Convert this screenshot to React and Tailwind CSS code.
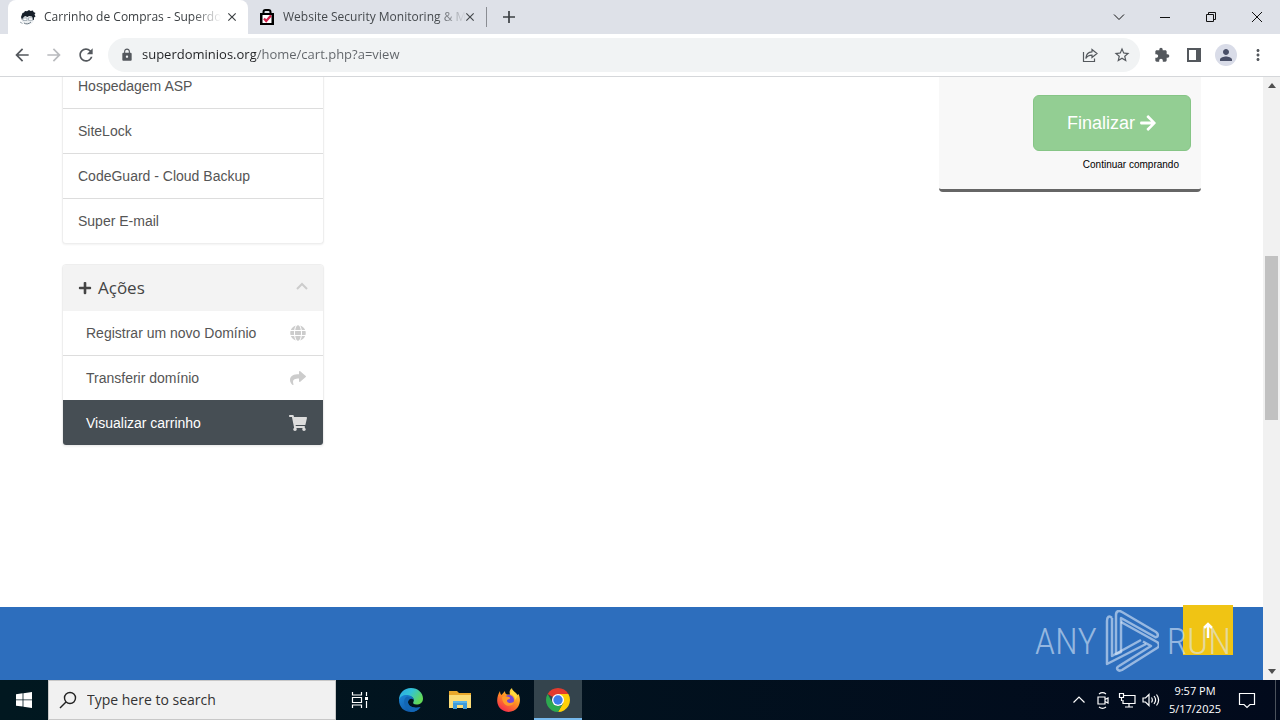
import React from "react";
import { FaArrowRight, FaGlobe, FaPlus, FaShare, FaShoppingCart } from "react-icons/fa";
import {
  MdArrowBack,
  MdArrowForward,
  MdClose,
  MdExtension,
  MdLock,
  MdMoreVert,
  MdPerson,
  MdRefresh,
  MdStarBorder,
} from "react-icons/md";

function CartoonFavicon() {
  return (
    <svg viewBox="0 0 16 16" className="size-4 shrink-0" aria-hidden="true">
      <path d="M2.500 8c2-3 10-3 11 0l.5 3c-1 3-3 4.500-6 4.500S1.500 14 1.500 11z" fill="#eceff1" />
      <path d="M1 8 2.500 4 4 3.500 5 2l2 .3L9 1l1.500 1L13 1.500 13.500 3 15.500 4l-1 1.500 1 2-1.500 1V11l-1.500-.5L12 7.500 9 7 7.500 8 5 7 3 9l-1 2z" fill="#17202a" />
      <path d="M3 9h4v2.500H3zM8.500 8.800h4v2.500h-4z" fill="#fff" stroke="#8b98a3" strokeWidth=".7" />
      <path d="M4 14c2 1.500 5 1 7-1" fill="none" stroke="#5c6b77" strokeWidth=".9" />
      <path d="M0 13l2.500 1.500" stroke="#9aa4ad" strokeWidth="1" />
    </svg>
  );
}

function BagFavicon() {
  return (
    <svg viewBox="0 0 16 16" className="-ml-px size-4 shrink-0" aria-hidden="true">
      <path d="M4.500 5V3c0-1 .8-2 2-2h3c1.200 0 2 1 2 2v2" fill="none" stroke="#000" strokeWidth="2" />
      <path d="M1 4h14v12H1z" fill="#000" />
      <path d="M3.500 6h9v8h-9z" fill="#fff" />
      <path d="m5 9.500 2.200 2.500L12 6.500" fill="none" stroke="#d3214b" strokeWidth="2.200" />
    </svg>
  );
}

function Tab({ title, active, icon }) {
  return (
    <div
      className={
        active
          ? "flex h-full w-60 items-center rounded-t-lg bg-white pl-3 pr-2 text-[#3c4043]"
          : "flex h-full w-[238px] items-center pl-3 pr-2 text-[#45494d]"
      }
    >
      <button role="tab" aria-selected={active} className="flex min-w-0 flex-1 items-center gap-2">
        {icon}
        <span className="flex-1 whitespace-nowrap text-left text-xs [mask-image:linear-gradient(90deg,#000_84%,transparent)]">
          {title}
        </span>
      </button>
      <button aria-label="Close tab" className="ml-2 flex size-4 items-center justify-center">
        <MdClose className="size-3.5" />
      </button>
    </div>
  );
}

function WindowButton({ label, children }) {
  return (
    <button aria-label={label} className="flex h-7 w-[46px] items-center justify-center">
      <svg viewBox="0 0 12 12" className="size-3" fill="none" stroke="#111" strokeWidth="1" aria-hidden="true">
        {children}
      </svg>
    </button>
  );
}

function TabStrip() {
  return (
    <header className="flex h-[34px] shrink-0 items-center justify-between bg-[#dee1e8]">
      <div role="tablist" className="flex h-full items-center pl-2">
        <Tab active title="Carrinho de Compras - Superdo" icon={<CartoonFavicon />} />
        <Tab active={false} title="Website Security Monitoring &amp; M" icon={<BagFavicon />} />
        <span className="h-5 w-px bg-[#8a8d93]" />
        <button aria-label="New tab" className="ml-2 flex size-7 items-center justify-center">
          <svg viewBox="0 0 14 14" className="size-3.5" stroke="#3c4043" strokeWidth="1.700" aria-hidden="true">
            <path d="M7 1v12M1 7h12" />
          </svg>
        </button>
      </div>
      <div className="flex">
        <WindowButton label="Search tabs"><path d="M1 3.500 6 8.500l5-5" /></WindowButton>
        <WindowButton label="Minimize"><path d="M1 6.500h10" /></WindowButton>
        <WindowButton label="Restore"><path d="M1.500 3.500h7v7h-7zM3.500 3.500v-2h7v7h-2" /></WindowButton>
        <WindowButton label="Close"><path d="m1 1 10 10M11 1 1 11" /></WindowButton>
      </div>
    </header>
  );
}

function ToolButton({ label, children }) {
  return (
    <button aria-label={label} className="flex size-8 items-center justify-center text-lg text-[#54585d]">
      {children}
    </button>
  );
}

function Toolbar() {
  return (
    <nav className="flex h-[43px] shrink-0 items-center border-b border-[#d5d7da] bg-white px-1.5">
      <ToolButton label="Back"><MdArrowBack className="size-5" /></ToolButton>
      <ToolButton label="Forward"><MdArrowForward className="size-5 text-[#b9bbbe]" /></ToolButton>
      <ToolButton label="Reload"><MdRefresh className="size-5" /></ToolButton>
      <div className="ml-1.5 mr-1.5 flex h-[34px] flex-1 items-center rounded-full bg-[#f1f3f4] pl-3 pr-0.5">
        <MdLock className="size-3.5 text-[#54585d]" />
        <input
          aria-label="Address"
          defaultValue="superdominios.org/home/cart.php?a=view"
          className="ml-2 min-w-0 flex-1 bg-[linear-gradient(90deg,#202124_114px,#5f6368_114px)] bg-clip-text text-[13px] text-transparent outline-none"
        />
        <ToolButton label="Share">
          <svg viewBox="0 0 16 16" className="size-4" fill="none" stroke="currentColor" strokeWidth="1.200" aria-hidden="true">
            <path d="M1.500 5v9.500h11v-3" />
            <path d="M10 2.500 15 6.500l-5 4V8.200C7 8.200 5 9.200 3.800 11.500 4 7.500 6.500 5 10 4.800z" />
          </svg>
        </ToolButton>
        <ToolButton label="Bookmark"><MdStarBorder /></ToolButton>
      </div>
      <ToolButton label="Extensions"><MdExtension className="size-4" /></ToolButton>
      <ToolButton label="Side panel">
        <svg viewBox="0 0 14 14" className="size-3.5" aria-hidden="true">
          <path d="M0 0h14v14H0zM2 2v10h7V2z" fill="currentColor" fillRule="evenodd" />
        </svg>
      </ToolButton>
      <ToolButton label="Profile">
        <span className="flex size-[22px] items-center justify-center rounded-full bg-[#d9dce8]">
          <MdPerson className="text-[#4a5068]" />
        </span>
      </ToolButton>
      <ToolButton label="Menu"><MdMoreVert /></ToolButton>
    </nav>
  );
}

const products = ["Hospedagem ASP", "SiteLock", "CodeGuard - Cloud Backup", "Super E-mail"];

const actions = [
  { label: "Registrar um novo Domínio", Icon: FaGlobe, active: false },
  { label: "Transferir domínio", Icon: FaShare, active: false },
  { label: "Visualizar carrinho", Icon: FaShoppingCart, active: true },
];

function Sidebar() {
  return (
    <aside className="-mt-[13px] flex w-[262px] flex-col gap-5 font-['Liberation_Sans',Arial,sans-serif] text-sm text-[#555]">
      <ul className="rounded-b border border-t-0 border-[#eee] bg-white shadow-xs">
        {products.map((name) => (
          <li key={name} className="border-b border-[#ddd] last:border-0">
            <a href="#" className="flex h-11 items-center px-[15px]">{name}</a>
          </li>
        ))}
      </ul>
      <section className="overflow-hidden rounded border border-[#eee] bg-white shadow-xs">
        <h3 className="flex h-[46px] items-center gap-1.5 bg-[#f3f3f3] px-[15px] font-['Open_Sans','Noto_Sans',sans-serif] text-[17px] text-[#444]">
          <FaPlus className="size-3.5" />
          <span className="flex-1">Ações</span>
          <svg viewBox="0 0 12 12" className="size-3" fill="none" stroke="#ccc" strokeWidth="2" aria-hidden="true">
            <path d="m1 7 5-5 5 5" />
          </svg>
        </h3>
        <ul>
          {actions.map(({ label, Icon, active }) => (
            <li
              key={label}
              data-active={active}
              className="border-b border-[#ddd] last:border-0 has-[+_[data-active=true]]:border-[#464e54]"
            >
              <a
                href="#"
                className={
                  active
                    ? "flex h-11 items-center justify-between bg-[#464e54] pl-[23px] pr-4 text-white"
                    : "flex h-11 items-center justify-between pl-[23px] pr-4"
                }
              >
                {label}
                <span className={active ? "flex w-[18px] justify-center text-[#ddd]" : "flex w-[18px] justify-center text-[#ccc]"}>
                  <Icon className={active ? "size-[18px]" : "size-4"} />
                </span>
              </a>
            </li>
          ))}
        </ul>
      </section>
    </aside>
  );
}

function OrderSummary() {
  return (
    <section className="flex h-[115px] w-[262px] flex-col items-end rounded-b border-b-[3px] border-[#666] bg-[#f8f8f8] px-2.5 pt-[18px] font-['Liberation_Sans',Arial,sans-serif]">
      <button className="flex h-14 w-[158px] items-center justify-center gap-1 rounded-md border border-[#86c586] bg-[#93ce93] text-lg text-white">
        Finalizar <FaArrowRight />
      </button>
      <a href="#" className="mr-3 mt-1.5 text-[10px] leading-4 text-black">Continuar comprando</a>
    </section>
  );
}

function Watermark() {
  return (
    <div className="pointer-events-none absolute bottom-2 right-8 flex items-center gap-2 font-['Roboto_Condensed','Liberation_Sans',sans-serif] text-[37px] font-light leading-none text-[#dde9f8]/60">
      <span>ANY</span>
      <svg viewBox="0 0 54 62" className="h-[62px] w-[54px]" fill="none" stroke="currentColor" strokeWidth="2.500" strokeLinejoin="round" aria-hidden="true">
        <path d="M7 8C4 5 2 7 2 11v43l39-20M7 8v38l29-16" />
        <path d="M11 44V5c0-4 3-5 6-3l34 20c3 2 2 6-1 5L16 8v34z" />
        <path d="M16 12l36 20c3 2 2 5 0 6L17 60c-4 2-7-2-3-4l32-20-8-4.500" />
      </svg>
      <span>RUN</span>
    </div>
  );
}

function PageScrollbar() {
  return (
    <div className="flex w-[17px] shrink-0 flex-col items-center justify-between bg-[#f1f1f1] py-1.5" aria-hidden="true">
      <svg viewBox="0 0 8 5" className="h-[5px] w-2" fill="#505050"><path d="m0 5 4-5 4 5z" /></svg>
      <div className="mb-[82px] h-[164px] w-[13px] bg-[#c1c1c1]" />
      <svg viewBox="0 0 8 5" className="h-[5px] w-2" fill="#505050"><path d="m0 0 4 5 4-5z" /></svg>
    </div>
  );
}

function Page() {
  return (
    <div className="flex min-h-0 flex-1 bg-white">
      <main className="relative flex min-w-0 flex-1 flex-col overflow-hidden">
        <div className="flex min-h-0 flex-1 items-start justify-between px-[62px]">
          <Sidebar />
          <OrderSummary />
        </div>
        <footer className="h-[73px] shrink-0 bg-[#2d6ebd]" />
        <button aria-label="Voltar ao topo" className="absolute bottom-[25px] right-[30px] flex size-[50px] items-center justify-center bg-[#f0c414]">
          <svg viewBox="0 0 10 16" className="h-4 w-2.5" fill="none" stroke="#fff" strokeWidth="2.500" aria-hidden="true">
            <path d="M5 16V2M1 6l4-4 4 4" />
          </svg>
        </button>
        <Watermark />
      </main>
      <PageScrollbar />
    </div>
  );
}

function EdgeIcon() {
  return (
    <svg viewBox="0 0 24 24" className="size-6" aria-hidden="true">
      <defs>
        <linearGradient id="edge-top" x1="0" y1="0" x2="1" y2=".5">
          <stop offset="0" stopColor="#2aa5e8" />
          <stop offset=".5" stopColor="#33c3d6" />
          <stop offset="1" stopColor="#62d957" />
        </linearGradient>
        <linearGradient id="edge-low" x1="0" y1="0" x2="1" y2="1">
          <stop offset="0" stopColor="#1b86d8" />
          <stop offset="1" stopColor="#0d4a9a" />
        </linearGradient>
      </defs>
      <path d="M0 12C0 5 5 0 12 0s12 5 12 10.500c0 4-3 6-6.500 6-3 0-4-1.500-3-2.800C16 11 13 8 9 8c-4 0-7.500 2-9 4z" fill="url(#edge-top)" />
      <path d="M0 12c1-4 5-5.500 8.500-5 4 .5 6.500 3 6.200 5-2-2.500-6-1-5.700 2.500.3 4 6 6.500 12.500 4.500C19 22.500 16 24 12 24 5 24 0 19 0 12z" fill="url(#edge-low)" />
      <path d="M8 8.500c-4 2-5 10 4 15.500 4 0 7.500-1.500 9.500-5-6.500 2-12.200-.5-12.500-4.500-.2-2 1-3.500 2.500-3.800C11 9.500 9.500 8.500 8 8.500z" fill="#1266b5" />
    </svg>
  );
}

function ExplorerIcon() {
  return (
    <svg viewBox="0 0 22 20" className="h-5 w-[22px]" aria-hidden="true">
      <path d="M0 1h8l2 2h12v15H0z" fill="#e9a82c" />
      <path d="M0 5h22v13H0z" fill="#fbdc77" />
      <path d="M4 11h14v8h-4v-4H8v4H4z" fill="#3d9ad9" />
      <path d="M4 11h14v2H4z" fill="#58b3e8" />
    </svg>
  );
}

function FirefoxIcon() {
  return (
    <svg viewBox="0 0 24 24" className="size-6" aria-hidden="true">
      <defs>
        <linearGradient id="fx-body" x1=".8" y1="0" x2=".2" y2="1">
          <stop offset="0" stopColor="#ffe94a" />
          <stop offset=".45" stopColor="#ff9222" />
          <stop offset="1" stopColor="#f5224f" />
        </linearGradient>
      </defs>
      <path d="M3 3c0 2 .5 3 1.500 4L8 3c0 2 .5 3 2 3.500h3c-1-3 0-5 2-6.500 0 3 4 4 5.500 7l1-1c2 4 2 9-.5 13-5 7-15 6-19 0-3-5-2-11 1-16z" fill="url(#fx-body)" />
      <circle cx="12" cy="12" r="5" fill="#7447d8" />
      <path d="M5 9c3-2 5 0 7 0 2 .5 1 2-1 2.500-2 .5-1 3.500 2 3.500 2 0 3-1 4-1-1 4-6 5-9 2.500C6 15 5 12 5 9z" fill="#ff9a29" />
      <path d="M13 6c3 0 5 3 5 6l2-3c0-3-4-4-4-7-2 1-2.500 2.500-3 4z" fill="#ffdc3f" />
    </svg>
  );
}

function ChromeIcon() {
  return (
    <svg viewBox="0 0 24 24" className="size-6" aria-hidden="true">
      <path d="M12 12 1.610 6A12 12 0 0 1 22.390 6z" fill="#e33b2e" />
      <path d="M12 6h10.390A12 12 0 0 1 12 24l5.200-9z" fill="#fdd008" />
      <path d="M1.610 6 6.800 15l4 3h3.500l2.900-3L12 24A12 12 0 0 1 1.610 6z" fill="#2da94f" />
      <circle cx="12" cy="12" r="6" fill="#fff" />
      <circle cx="12" cy="12" r="4.700" fill="#3b7de9" />
    </svg>
  );
}

function TaskButton({ label, active, children }) {
  return (
    <button
      aria-label={label}
      className={
        active
          ? "flex h-full w-12 items-center justify-center border-b-2 border-[#76b9ed] bg-[#34444d] pt-0.5"
          : "flex h-full w-12 items-center justify-center"
      }
    >
      {children}
    </button>
  );
}

function TrayIcon({ label, children }) {
  return (
    <button aria-label={label} className="flex h-full w-6 items-center justify-center">
      <svg viewBox="0 0 18 18" className="size-[18px]" fill="none" stroke="#fff" strokeWidth="1.200" aria-hidden="true">
        {children}
      </svg>
    </button>
  );
}

function Taskbar() {
  return (
    <footer className="flex h-10 shrink-0 items-center justify-between bg-linear-to-r from-[#011820] to-[#020a1c]">
      <div className="flex h-full items-center">
        <button aria-label="Start" className="flex h-full w-12 items-center justify-center">
          <svg viewBox="0 0 16 16" className="size-4" fill="#fff" aria-hidden="true">
            <path d="M0 2.200 6.600 1.300v6.200H0zM7.400 1.200 16 0v7.500H7.400zM0 8.300h6.600v6.300L0 13.700zM7.400 8.300H16V16l-8.600-1.200z" />
          </svg>
        </button>
        <label className="flex h-full w-72 items-center gap-2.5 border border-[#c8c8c8] bg-[#f1f1f1] pl-2.5">
          <svg viewBox="0 0 18 18" className="size-[18px]" fill="none" stroke="#222" strokeWidth="1.400" aria-hidden="true">
            <circle cx="11" cy="7" r="5.500" />
            <path d="m7 11-6 6" />
          </svg>
          <input aria-label="Search" placeholder="Type here to search" className="min-w-0 flex-1 text-sm outline-none placeholder:text-[#333]" />
        </label>
        <TaskButton label="Task view">
          <svg viewBox="0 0 18 18" className="size-[18px]" fill="none" stroke="#fff" strokeWidth="1.200" aria-hidden="true">
            <path d="M1.500 1v3h9V1M1.500 6.500h9v5h-9zM1.500 17v-3h9v3M15.500 1v4M15.500 10v7" />
            <path d="M14 6h3v3h-3z" fill="#fff" stroke="none" />
          </svg>
        </TaskButton>
        <div className="ml-[3px] flex h-full gap-px">
          <TaskButton label="Microsoft Edge"><EdgeIcon /></TaskButton>
          <TaskButton label="File Explorer"><ExplorerIcon /></TaskButton>
          <TaskButton label="Firefox"><FirefoxIcon /></TaskButton>
          <TaskButton label="Google Chrome" active><ChromeIcon /></TaskButton>
        </div>
      </div>
      <div className="flex h-full items-center text-white">
        <TrayIcon label="Show hidden icons"><path d="m3.500 11.500 5.500-5.500 5.500 5.500" /></TrayIcon>
        <TrayIcon label="Meet now">
          <path d="M4 6h7v7H4zM11 8.500l3-1.500v5l-3-1.500M5 3c2-1.500 5-1.500 7 0M5 16c2 1.500 5 1.500 7 0" />
        </TrayIcon>
        <TrayIcon label="Network">
          <path d="M6 4.500h11v8H5V9M11 12.500V16M7 16h8M1.500 2.500h4v4h-4zM3.500 6.500V10" />
        </TrayIcon>
        <TrayIcon label="Volume">
          <path d="M1 7h2.500L7 3.500v11L3.500 11H1zM9.500 6.500c1 1.500 1 3.500 0 5M12 5c2 2.500 2 5.500 0 8M14.500 3.500c2.700 3.500 2.700 7.500 0 11" />
        </TrayIcon>
        <button className="flex w-16 flex-col items-center whitespace-nowrap text-[11px] leading-[18px]">
          <span>9:57 PM</span>
          <span>5/17/2025</span>
        </button>
        <button aria-label="Notifications" className="flex h-full w-10 items-center justify-center">
          <svg viewBox="0 0 18 18" className="size-[18px]" fill="none" stroke="#fff" strokeWidth="1.200" aria-hidden="true">
            <path d="M1.500 2.500h15v11H12l-3 3-3-3H1.500z" />
          </svg>
        </button>
        <button aria-label="Show desktop" className="ml-2 h-full w-[5px] border-l border-[#4b525c]" />
      </div>
    </footer>
  );
}

export default function App() {
  return (
    <div className="flex h-screen flex-col overflow-hidden font-['Open_Sans','Noto_Sans',sans-serif]">
      <TabStrip />
      <Toolbar />
      <Page />
      <Taskbar />
    </div>
  );
}
